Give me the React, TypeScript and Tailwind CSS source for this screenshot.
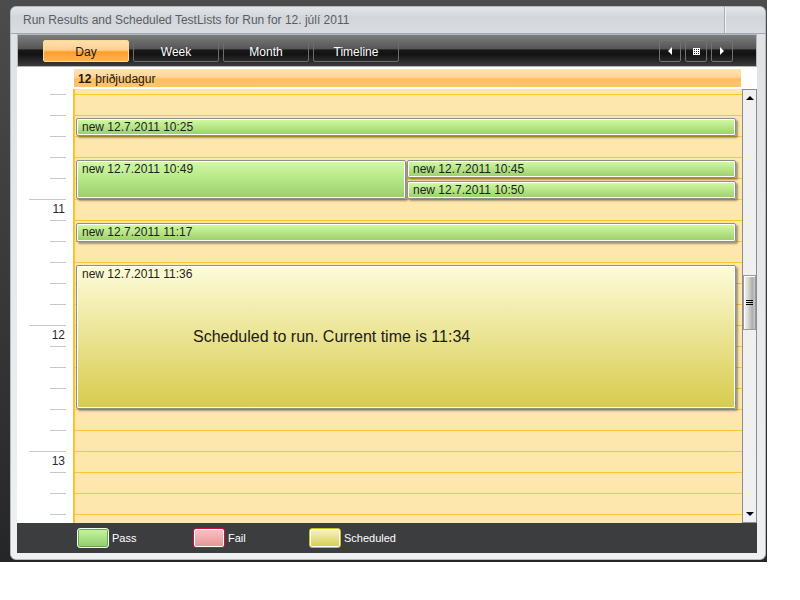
import React from "react";

const font = { fontFamily: '"Liberation Sans", Arial, sans-serif' };

type Ev = { label: string; top: number; left: number; width: number; height: number; kind: "pass" | "sched"; note?: string };

const events: Ev[] = [
  { label: "new 12.7.2011 10:25", top: 29, left: 1, width: 660, height: 18, kind: "pass" },
  { label: "new 12.7.2011 10:49", top: 71, left: 1, width: 330, height: 39, kind: "pass" },
  { label: "new 12.7.2011 10:45", top: 71, left: 332, width: 329, height: 18, kind: "pass" },
  { label: "new 12.7.2011 10:50", top: 92, left: 332, width: 329, height: 18, kind: "pass" },
  { label: "new 12.7.2011 11:17", top: 134, left: 1, width: 660, height: 19, kind: "pass" },
  { label: "new 12.7.2011 11:36", top: 176, left: 1, width: 660, height: 144, kind: "sched", note: "Scheduled to run. Current time is 11:34" },
];

// 21px slots from 10:10 down; hours at index 5, 11, 17
const slots = Array.from({ length: 22 }, (_, i) => {
  if (i === 5) return "11";
  if (i === 11) return "12";
  if (i === 17) return "13";
  return null;
});

function NavButton({ children }: { children: React.ReactNode }) {
  return (
    <div className="flex h-[22px] w-[22px] items-center justify-center rounded-[2px] border border-[#727272]">
      {children}
    </div>
  );
}

function ViewButton({ label, active }: { label: string; active?: boolean }) {
  return (
    <div
      className={
        active
          ? "flex h-[22px] w-[86px] items-center justify-center rounded-[2px] border border-[#ffd98e] bg-[linear-gradient(to_bottom,#ffdfb0_0%,#ffcf8e_45%,#ff9e2c_55%,#ffb44c_100%)] pt-[1px] text-[12px] text-[#1c1c1c]"
          : "flex h-[22px] w-[86px] items-center justify-center rounded-[2px] border border-[#6c6c6c] pt-[1px] text-[12px] text-white"
      }
    >
      {label}
    </div>
  );
}

function EventBox({ ev }: { ev: Ev }) {
  const bg =
    ev.kind === "pass"
      ? "bg-[linear-gradient(to_bottom,#d2fca2_0%,#9bce6b_100%)]"
      : "bg-[linear-gradient(to_bottom,#fdfcd8_0%,#d7cb4c_100%)]";
  return (
    <div
      className={`absolute flex flex-col rounded-[2px] border border-[#8e8e8e] pl-[5px] shadow-[inset_0_0_0_1px_#ffffff,2px_2px_2px_rgba(0,0,0,0.35)] ${bg}`}
      style={{ top: ev.top, left: ev.left, width: ev.width, height: ev.height }}
    >
      <div className="h-[16px] text-[12px] leading-[16px] text-[#1e1e1e]">{ev.label}</div>
      {ev.note && <div className="mt-[46px] pl-[111px] text-[16px] leading-[18px] text-[#1a1a1a]">{ev.note}</div>}
    </div>
  );
}

function LegendItem({ label, box }: { label: string; box: string }) {
  return (
    <div className="flex w-[116px] items-center gap-[3px]">
      <div className={`h-[20px] w-[32px] rounded-[3px] border ${box}`} />
      <span className="text-[11px] text-white">{label}</span>
    </div>
  );
}

export default function App() {
  return (
    <div className="h-[562px] w-[767px] bg-[linear-gradient(to_bottom,#4c4c4c,#262626)] pl-[10px] pt-[6px]" style={font}>
      <div className="flex h-[554px] w-[756px] flex-col rounded-[6px] border border-[#b4b9be] bg-[linear-gradient(to_bottom,#dfe2e5,#eef0f1)] pl-[6px] pr-[8px]">
        {/* title bar */}
        <div className="-ml-[6px] -mr-[8px] flex h-[27px] items-center rounded-t-[6px] border-b border-[#a4a9af] bg-[linear-gradient(to_bottom,#e3e6e9_0%,#d2d6da_40%,#d9dce0_100%)] pl-[12px]">
          <span className="flex-1 text-[12px] text-[#5a5e63]">Run Results and Scheduled TestLists for Run for 12. júlí 2011</span>
          <div className="h-full w-[41px] border-l border-[#a9aeb4] shadow-[inset_1px_0_0_#f2f4f5]" />
        </div>

        {/* toolbar */}
        <div className="flex h-[33px] items-center border border-[#b8b8b8] bg-[linear-gradient(to_bottom,#7d7d7d_0%,#555555_45%,#181818_48%,#121212_62%,#3c3c3c_100%)] pl-[25px] pr-[23px] pt-[1px]">
          <div className="flex gap-[4px]">
            <ViewButton label="Day" active />
            <ViewButton label="Week" />
            <ViewButton label="Month" />
            <ViewButton label="Timeline" />
          </div>
          <div className="ml-auto flex gap-[4px]">
            <NavButton>
              <div className="h-0 w-0 border-y-[4px] border-r-[4px] border-y-transparent border-r-white" />
            </NavButton>
            <NavButton>
              <div className="grid grid-cols-3 gap-px border border-white bg-white">
                {Array.from({ length: 9 }).map((_, i) => (
                  <div key={i} className="h-[1px] w-[1px] bg-[#222]" />
                ))}
              </div>
            </NavButton>
            <NavButton>
              <div className="h-0 w-0 border-y-[4px] border-l-[4px] border-y-transparent border-l-white" />
            </NavButton>
          </div>
        </div>

        {/* body */}
        <div className="flex h-[456px] bg-white">
          {/* time column */}
          <div className="h-full w-[56px] overflow-hidden pt-[27px]">
            {slots.map((label, i) => (
              <div key={i} className="flex h-[21px] flex-col items-end pr-[7px]">
                <div className={`h-px bg-[#c8c8c8] ${label ? "w-[37px]" : "w-[16px]"}`} />
                {label && <div className="mt-[2px] pr-[1px] text-[12px] leading-[14px] text-[#2a2a2a]">{label}</div>}
              </div>
            ))}
          </div>

          <div className="flex w-[684px] flex-col">
            {/* day header */}
            <div className="flex h-[22px] pt-[1px]">
              <div className="flex h-[20px] w-[669px] items-center border border-white bg-[linear-gradient(to_bottom,#ffe2b4_0%,#ffd597_45%,#ffbf5e_55%,#ffc46a_100%)] pl-[4px] pt-[1px] text-[12px] text-[#1a1a1a]">
                <b className="mr-[4px]">12</b>þriðjudagur
              </div>
            </div>

            <div className="flex h-[434px]">
              {/* day area */}
              <div className="relative h-full w-[669px] overflow-hidden border-l-2 border-[#fbc12f] bg-[#fde7ad]">
                <div className="pt-[5px]">
                  {slots.map((_, i) => (
                    <div key={i} className="h-[21px] border-t border-[#fcc534]" />
                  ))}
                </div>
                {events.map((ev) => (
                  <EventBox key={ev.label} ev={ev} />
                ))}
              </div>

              {/* scrollbar */}
              <div className="flex h-full w-[15px] flex-col border border-[#8c8c8c] bg-[#f0f0f0]">
                <div className="flex h-[16px] items-center justify-center">
                  <div className="h-0 w-0 border-x-[4px] border-b-[4px] border-x-transparent border-b-black" />
                </div>
                <div className="h-[169px]" />
                <div className="flex h-[55px] items-center justify-center border border-[#9a9a9a] bg-[linear-gradient(to_right,#f4f4f4_0%,#d6d6d6_40%,#aeaeae_75%,#c8c8c8_100%)] shadow-[inset_1px_1px_0_#ffffff]">
                  <div className="flex flex-col gap-[1px]">
                    <div className="h-px w-[7px] bg-black" />
                    <div className="h-px w-[7px] bg-black" />
                    <div className="h-px w-[7px] bg-black" />
                  </div>
                </div>
                <div className="flex-1" />
                <div className="flex h-[16px] items-center justify-center">
                  <div className="h-0 w-0 border-x-[4px] border-t-[4px] border-x-transparent border-t-black" />
                </div>
              </div>
            </div>
          </div>
        </div>

        {/* legend */}
        <div className="flex h-[30px] items-center bg-[#3c3d3f] pl-[60px]">
          <LegendItem label="Pass" box="border-[#f4fff0] bg-[linear-gradient(to_bottom,#c6f6a0,#8fcc6a)] shadow-[inset_0_0_0_1px_#6aa84a]" />
          <LegendItem label="Fail" box="border-[#c8143c] bg-[linear-gradient(to_bottom,#f7c4c4,#e69494)] shadow-[inset_0_0_0_1px_#ffffff]" />
          <LegendItem label="Scheduled" box="border-[#c9bf16] bg-[linear-gradient(to_bottom,#f6f4c6,#d6cc4e)] shadow-[inset_0_0_0_1px_#ffffff]" />
        </div>
      </div>
    </div>
  );
}
